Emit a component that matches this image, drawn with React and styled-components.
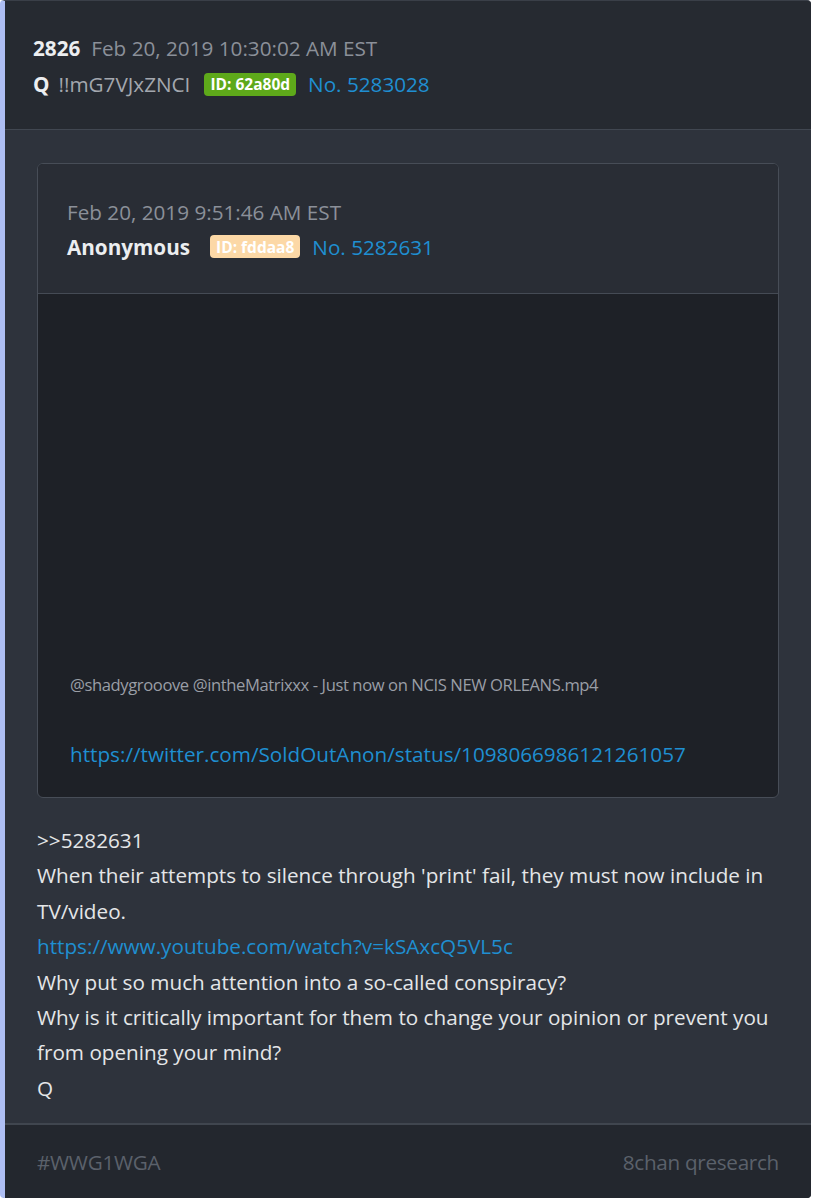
import React from "react";
import styled, { createGlobalStyle } from "styled-components";

const Global = createGlobalStyle`
  html, body { margin: 0; padding: 0; background: #ffffff; }
  body { font-family: "Open Sans", "Noto Sans", sans-serif; }
`;

const Card = styled.article`
  width: 811px;
  height: 1198px;
  box-sizing: border-box;
  display: flex;
  flex-direction: column;
  background: #2e333c;
  border-left: 5px solid #aebef3;
  border-top: 1px solid #3a3f48;
  border-radius: 4px;
  overflow: hidden;
`;

const Header = styled.header`
  background: #262a31;
  border-bottom: 1px solid #414751;
  padding: 29px 0 27px 28px;
  display: flex;
  flex-direction: column;
`;

const Line = styled.div`
  display: flex;
  align-items: center;
  height: ${(p) => p.$h || 36}px;
  font-size: 20.7px;
  white-space: nowrap;
`;

const Strong = styled.span`
  font-weight: 700;
  color: #eceef0;
  margin-right: ${(p) => p.$mr || 10}px;
`;

const Muted = styled.span`
  color: ${(p) => p.$c || "#8b9099"};
  margin-right: ${(p) => p.$mr || 0}px;
`;

const Badge = styled.span`
  display: inline-flex;
  align-items: center;
  height: 23px;
  padding: 0 6px;
  border-radius: 4px;
  background: ${(p) => p.$bg};
  color: #ffffff;
  font-weight: 700;
  font-size: 15.5px;
  margin-right: 12px;
`;

const Link = styled.a`
  color: #1f8fd1;
  text-decoration: none;
`;

const Body = styled.div`
  flex: 1;
  padding: 33px 32px 0 32px;
  display: flex;
  flex-direction: column;
`;

const Quote = styled.div`
  border: 1px solid #474d57;
  border-radius: 6px;
  overflow: hidden;
  background: #1e2127;
`;

const QuoteHeader = styled.div`
  background: #292d35;
  border-bottom: 1px solid #454b55;
  padding: 30px 0 29px 29px;
  display: flex;
  flex-direction: column;
`;

const Media = styled.div`
  height: 380px;
`;

const Caption = styled.div`
  padding: 0 0 25px 32px;
  display: flex;
  flex-direction: column;
`;

const FileName = styled.div`
  font-size: 16.6px;
  line-height: 22px;
  color: #9a9ea6;
  letter-spacing: -0.4px;
  margin-bottom: 40px;
`;

const CaptionLink = styled(Link)`
  font-size: 20.7px;
  line-height: 36px;
`;

const Text = styled.div`
  margin-top: 25px;
  font-size: 20.7px;
  line-height: 35.4px;
  color: #e4e6e8;
  padding-bottom: 17px;
`;

const Footer = styled.footer`
  background: #23272e;
  border-top: 2px solid #40464f;
  height: 75px;
  box-sizing: border-box;
  padding: 0 32px 0 32px;
  display: flex;
  align-items: center;
  justify-content: space-between;
  font-size: 20.7px;
  color: #5b616b;
  letter-spacing: -0.3px;
`;

export default function App() {
  return (
    <>
      <Global />
      <Card>
        <Header>
          <Line>
            <Strong $mr={11}>2826</Strong>
            <Muted>Feb 20, 2019 10:30:02 AM EST</Muted>
          </Line>
          <Line>
            <Strong $mr={9}>Q</Strong>
            <Muted $c="#a3a7ae" $mr={14}>!!mG7VJxZNCI</Muted>
            <Badge $bg="#5ea91a">ID: 62a80d</Badge>
            <Link href="#">No. 5283028</Link>
          </Line>
        </Header>
        <Body>
          <Quote>
            <QuoteHeader>
              <Line $h={35}>
                <Muted>Feb 20, 2019 9:51:46 AM EST</Muted>
              </Line>
              <Line $h={35}>
                <Strong $mr={20}>Anonymous</Strong>
                <Badge $bg="#fcd8a6">ID: fddaa8</Badge>
                <Link href="#">No. 5282631</Link>
              </Line>
            </QuoteHeader>
            <Media />
            <Caption>
              <FileName>@shadygrooove @intheMatrixxx - Just now on NCIS NEW ORLEANS.mp4</FileName>
              <CaptionLink href="#">https://twitter.com/SoldOutAnon/status/1098066986121261057</CaptionLink>
            </Caption>
          </Quote>
          <Text>
            &gt;&gt;5282631
            <br />
            When their attempts to silence through 'print' fail, they must now include in TV/video.
            <br />
            <Link href="#">https://www.youtube.com/watch?v=kSAxcQ5VL5c</Link>
            <br />
            Why put so much attention into a so-called conspiracy?
            <br />
            Why is it critically important for them to change your opinion or prevent you from opening your mind?
            <br />
            Q
          </Text>
        </Body>
        <Footer>
          <span>#WWG1WGA</span>
          <span>8chan qresearch</span>
        </Footer>
      </Card>
    </>
  );
}
